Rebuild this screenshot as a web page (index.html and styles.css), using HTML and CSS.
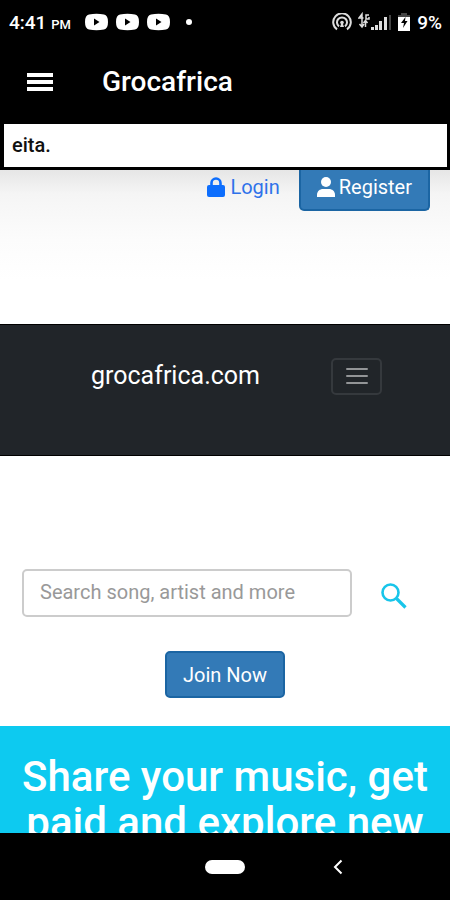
FILE: index.html
```html
<!DOCTYPE html>
<html lang="en">
<head>
<meta charset="utf-8">
<meta name="viewport" content="width=device-width, initial-scale=1">
<title>Grocafrica</title>
<link rel="stylesheet" href="styles.css">
</head>
<body>
<div class="screen">
  <div class="status">
    <span class="clock">4:41 <small>PM</small></span>
    <span class="notifications">
      <svg width="23" height="18" viewBox="0 0 23 18"><path d="M4 1.500Q11.500 0 19 1.500q4 .5 4 7.500t-4 7.500q-7.500 1.500-15 0Q0 16 0 9t4-7.500z" fill="#fff"/><path d="M9 5.500l5.500 3.500L9 12.500z" fill="#000"/></svg>
      <svg width="23" height="18" viewBox="0 0 23 18"><path d="M4 1.500Q11.500 0 19 1.500q4 .5 4 7.500t-4 7.500q-7.500 1.500-15 0Q0 16 0 9t4-7.500z" fill="#fff"/><path d="M9 5.500l5.500 3.500L9 12.500z" fill="#000"/></svg>
      <svg width="23" height="18" viewBox="0 0 23 18"><path d="M4 1.500Q11.500 0 19 1.500q4 .5 4 7.500t-4 7.500q-7.500 1.500-15 0Q0 16 0 9t4-7.500z" fill="#fff"/><path d="M9 5.500l5.500 3.500L9 12.500z" fill="#000"/></svg>
      <i class="dot"></i>
    </span>
    <span class="system">
      <svg width="20" height="18" viewBox="0 0 20 18" fill="none" stroke="#ddd" stroke-width="2"><path d="M5 16.400a8.800 8.800 0 1 1 10 0M7 13.400a5 5 0 1 1 6 0"/><path d="M10 8l2 6H8z" fill="#ddd" stroke="none"/><circle cx="10" cy="9.500" r="1.800" fill="#ddd" stroke="none"/></svg>
      <svg width="33" height="20" viewBox="0 0 33 20"><g fill="none" stroke="#ddd" stroke-width="1.500"><path d="M4 8V2L1 6h4.500M11 3H8v4h3V5M4 8v7M1.500 12L4 15l2-3M7.500 15V9M5.500 11l2-2.500 2 2.500"/></g><path d="M13 15h3v3h-3zM17 13h3v5h-3zM21 9h3v9h-3zM26 5h3v13h-3z" fill="#ddd"/><path d="M31 3h2v15h-2z" fill="#444"/></svg>
      <svg width="14" height="20" viewBox="0 0 14 20"><path d="M4 1h6v2h3v3H1V3h3z" fill="#444"/><path d="M1 5h12v14H1z" fill="#fff"/><path d="M8.500 5L4 11h3l-1 5 4.500-7H8z" fill="#000"/></svg>
      <span class="charge">9%</span>
    </span>
  </div>

  <header class="appbar">
    <button class="menu" type="button" aria-label="Menu"><svg width="28" height="20" viewBox="0 0 28 20" fill="#fff"><path d="M1 1h26v4H1zM1 8h26v4H1zM1 15h26v4H1z"/></svg></button>
    <h1 class="title">Grocafrica</h1>
  </header>

  <div class="notice">eita.</div>

  <main class="page">
    <div class="account">
      <a class="login" href="#login"><svg width="18" height="20" viewBox="0 0 18 20"><path d="M4.500 9V6a4.500 4.500 0 0 1 9 0v3" fill="none" stroke="#0d6efd" stroke-width="2.600"/><rect y="8" width="18" height="12" rx="2" fill="#0d6efd"/></svg>Login</a>
      <a class="btn register" href="#register"><svg width="18" height="20" viewBox="0 0 18 20" fill="#fff"><circle cx="9" cy="5" r="5"/><path d="M0 20v-2c0-4 3-6 6-6h6c3 0 6 2 6 6v2z"/></svg>Register</a>
    </div>

    <nav class="navbar">
      <a class="brand" href="#home">grocafrica.com</a>
      <button class="toggler" type="button" aria-label="Toggle navigation"><svg width="22" height="18" viewBox="0 0 22 18" stroke="#939597" stroke-width="2" stroke-linecap="round"><path d="M1 2h20M1 9h20M1 16h20"/></svg></button>
    </nav>

    <form class="search">
      <input class="field" type="text" aria-label="Search" placeholder="Search song, artist and more">
      <button class="find" type="button" aria-label="Find"><svg width="26" height="26" viewBox="0 0 26 26" fill="none" stroke="#18c5ea"><circle cx="9.500" cy="9.500" r="8" stroke-width="2.600"/><path d="M15.500 15.500l9 9" stroke-width="3.200"/></svg></button>
    </form>

    <div class="join"><button class="btn" type="button">Join Now</button></div>

    <section class="hero"><h2>Share your music, get paid and explore new</h2></section>
  </main>

  <footer class="system-nav">
    <button class="home" type="button" aria-label="Home"></button>
    <button class="back" type="button" aria-label="Back"><svg width="10" height="16" viewBox="0 0 10 16" fill="none" stroke="#fff" stroke-width="2"><path d="M8.500 1.500L2 8l6.500 6.500"/></svg></button>
  </footer>
</div>
</body>
</html>
```
FILE: styles.css
```css
* { box-sizing: border-box; }
body { margin: 0; font-family: Roboto, "Liberation Sans", sans-serif; background: #000; }
svg { display: block; flex: none; }
button { padding: 0; border: 0; background: none; font: inherit; color: inherit; }
a { text-decoration: none; color: inherit; }
h1, h2 { margin: 0; }

.screen { display: flex; flex-direction: column; height: 100vh; background: #fff; }

.status { display: flex; align-items: center; flex: none; height: 44px; padding: 0 8px 0 9px; background: #000; color: #fff; font-size: 19px; font-weight: 500; }
.clock small { font-size: 13px; }
.notifications { display: flex; align-items: center; gap: 8px; margin-left: 14px; }
.dot { width: 6px; height: 6px; margin-left: 8px; border-radius: 50%; background: #fff; }
.system { display: flex; align-items: center; gap: 6px; margin-left: auto; }

.appbar { display: flex; align-items: center; flex: none; gap: 48px; height: 76px; padding: 0 26px; background: #000; color: #fff; }
.title { font-size: 28px; font-weight: 500; line-height: 32px; }

.notice { flex: none; padding: 0 8px; border: solid #000; border-width: 4px 3px 3px 4px; background: #fff; color: #111; font-size: 20px; font-weight: 500; line-height: 43px; }

.page { display: flex; flex-direction: column; flex: 1; min-height: 0; overflow: hidden; background: linear-gradient(#e6e6e6, #f5f5f5 24px, #fcfcfc 70px, #fff 110px); }

.account { display: flex; justify-content: flex-end; flex: none; gap: 19px; padding-right: 20px; margin-bottom: 113px; font-size: 20px; line-height: 24px; }
.login { display: flex; align-items: center; gap: 5px; padding-bottom: 7px; color: #2f72ea; }
.btn { display: flex; align-items: center; gap: 4px; padding: 10px 16px 9px; border: 2px solid #1b65a3; border-radius: 5px; background: #337ab7; color: #fff; font-size: 20px; line-height: 24px; }
.register { padding: 5px 16px 10px; border-top: 0; border-radius: 0 0 5px 5px; }

.navbar { display: flex; align-items: center; justify-content: space-between; flex: none; height: 132px; padding: 0 68px 28px 91px; border: solid #000; border-width: 1px 0; background: #212529; color: #fff; }
.brand { font-size: 25px; line-height: 32px; }
.toggler { display: grid; place-items: center; width: 51px; height: 37px; border: 2px solid #35393d; border-radius: 5px; }

.search { display: flex; align-items: flex-end; flex: none; gap: 29px; padding: 113px 43px 34px 22px; }
.field { flex: 1; min-width: 0; height: 48px; padding: 0 16px 2px; border: 2px solid #ccc; border-radius: 5px; background: #fff; font: inherit; font-size: 20px; }
.field::placeholder { color: #999; opacity: 1; }
.find { padding-bottom: 8px; }

.join { display: flex; justify-content: center; flex: none; margin-bottom: 28px; }

.hero { flex: none; padding: 28px 16px; background: #0dcaf0; color: #fff; text-align: center; }
.hero h2 { font-size: 42px; font-weight: 500; line-height: 46px; }

.system-nav { display: grid; grid-template-columns: 1fr 40px 1fr; align-items: center; flex: none; height: 67px; background: #000; }
.home { grid-column: 2; height: 14px; border-radius: 7px; background: #fff; }
.back { margin-left: 88px; justify-self: start; }
```
